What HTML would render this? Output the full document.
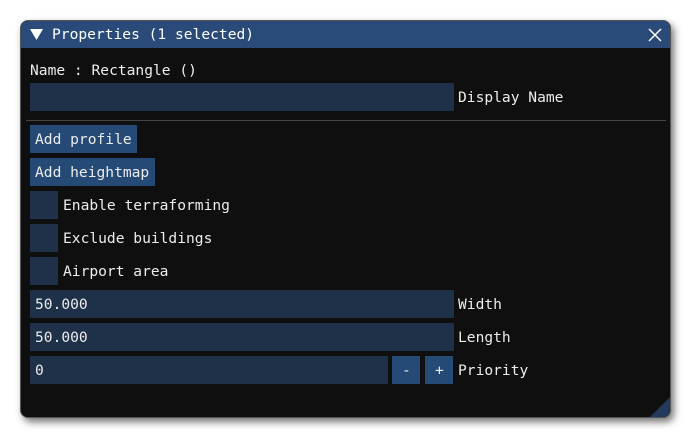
<!DOCTYPE html>
<html><head><style>
body{margin:0;width:691px;height:438px;background:#fff;position:relative;overflow:hidden;font-family:"DejaVu Sans Mono","Liberation Mono",monospace;font-size:14.6px;color:#ececec}
.win{position:absolute;left:20px;top:20px;width:651px;height:398px;background:#0f0f0f;border-radius:8px;overflow:hidden;box-shadow:3px 4px 8px rgba(0,0,0,.55);border:1px solid #555;box-sizing:border-box}
.tb{position:absolute;left:0;top:0;right:0;height:27px;background:#2a4a7a}
.a{position:absolute;white-space:pre;line-height:30px}
.f{position:absolute;background:#1f3049;height:28px}
.b{position:absolute;background:#264a76;height:28px}
.sep{position:absolute;left:5px;width:640px;top:99px;height:1px;background:#444}
</style></head><body>
<div class="win">
<div class="tb"></div>
<svg style="position:absolute;left:9px;top:8px" width="13" height="12"><path d="M0 0H13L6.5 11Z" fill="#fff"/></svg>
<div class="a" style="left:31px;top:0;line-height:28px;color:#fff">Properties (1 selected)</div>
<svg style="position:absolute;left:627px;top:7px" width="14" height="14"><path d="M1 1L13 13M13 1L1 13" stroke="#fff" stroke-width="1.5"/></svg>
<div class="a" style="left:9px;top:35px">Name : Rectangle ()</div>
<div class="f" style="left:9px;top:62px;width:424px"></div>
<div class="a" style="left:437px;top:62px">Display Name</div>
<div class="sep"></div>
<div class="b" style="left:9px;top:104px;width:107px"></div><div class="a" style="left:14px;top:104px">Add profile</div>
<div class="b" style="left:9px;top:137px;width:125px"></div><div class="a" style="left:14px;top:137px">Add heightmap</div>
<div class="f" style="left:9px;top:170px;width:28px"></div><div class="a" style="left:42px;top:170px">Enable terraforming</div>
<div class="f" style="left:9px;top:203px;width:28px"></div><div class="a" style="left:42px;top:203px">Exclude buildings</div>
<div class="f" style="left:9px;top:236px;width:28px"></div><div class="a" style="left:42px;top:236px">Airport area</div>
<div class="f" style="left:9px;top:269px;width:424px"></div><div class="a" style="left:14px;top:269px">50.000</div><div class="a" style="left:437px;top:269px">Width</div>
<div class="f" style="left:9px;top:302px;width:424px"></div><div class="a" style="left:14px;top:302px">50.000</div><div class="a" style="left:437px;top:302px">Length</div>
<div class="f" style="left:9px;top:335px;width:358px"></div><div class="a" style="left:14px;top:335px">0</div>
<div class="b" style="left:371px;top:335px;width:28px"></div><div class="a" style="left:381px;top:335px">-</div>
<div class="b" style="left:404px;top:335px;width:28px"></div><div class="a" style="left:414px;top:335px">+</div>
<div class="a" style="left:437px;top:335px">Priority</div>
<svg style="position:absolute;right:0;bottom:0" width="20" height="20"><path d="M20 0L20 20L0 20Z" fill="#233a5c"/></svg>
</div>
</body></html>
